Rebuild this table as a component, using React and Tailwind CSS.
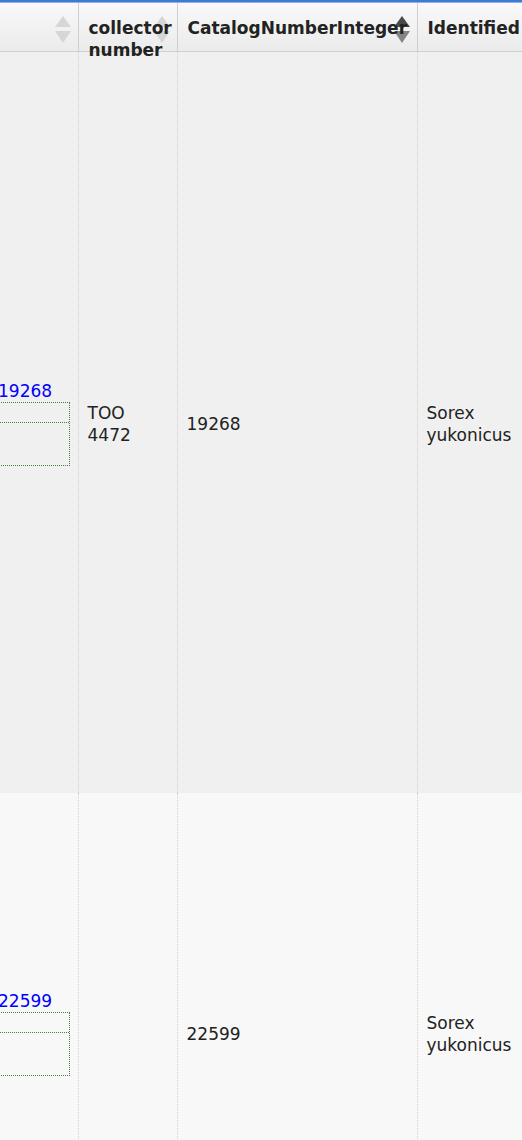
import React from 'react'

function SortIcon({ active }) {
  return (
    <svg width="18" height="27" viewBox="0 0 18 27" className="absolute right-[6px] top-[13px]">
      <path d="M9 0 L17 11 L1 11 Z" fill={active ? '#4a4a4a' : '#d6d6d6'} />
      <path d="M1 15 L17 15 L9 27 Z" fill={active ? '#858585' : '#d6d6d6'} />
    </svg>
  )
}

const rows = [
  { id: '19268', collector: ['TOO', '4472'], catalog: '19268', name: ['Sorex', 'yukonicus'], h: 'h-[742px]', bg: 'bg-[#f0f0f0]' },
  { id: '22599', collector: null, catalog: '22599', name: ['Sorex', 'yukonicus'], h: 'h-[478px]', bg: 'bg-[#f8f8f8]' },
]

function App() {
  return (
    <div className="w-[522px] h-[1140px] overflow-hidden bg-white text-[#222] font-['DejaVu_Sans',Verdana,sans-serif] text-[17px] leading-[22px]">
      <div className="h-[3px] bg-[#3f7bd3] border-b border-[#8cb2e8]"></div>
      <table className="border-collapse table-fixed w-[640px]">
        <colgroup>
          <col className="w-[78px]" />
          <col className="w-[99px]" />
          <col className="w-[240px]" />
          <col className="w-[223px]" />
        </colgroup>
        <thead>
          <tr className="h-[48px] bg-gradient-to-b from-[#f9f9f9] to-[#ebebeb]">
            <th className="relative border-r border-b border-[#cfcfcf] p-0 align-top"><SortIcon /></th>
            <th className="relative border-r border-b border-[#cfcfcf] pl-[10px] pr-1 pt-[14px] align-top text-left font-bold">
              <div className="h-[32px] overflow-visible whitespace-nowrap">
                <SortIcon />
                <span className="relative">collector<br />number</span>
              </div>
            </th>
            <th className="relative border-r border-b border-[#cfcfcf] pl-[10px] pt-[14px] align-top text-left font-bold whitespace-nowrap">
              <SortIcon active />
              <span className="relative">CatalogNumberInteger</span>
            </th>
            <th className="relative border-b border-[#cfcfcf] pl-[10px] pt-[14px] align-top text-left font-bold whitespace-nowrap">
              Identified
            </th>
          </tr>
        </thead>
        <tbody>
          {rows.map((r) => (
            <tr key={r.id} className={`${r.h} ${r.bg}`}>
              <td className="border-r border-dotted border-[#d2d2d2] pr-[8px] pl-0 pt-[2px] align-middle overflow-hidden">
                <div className="-ml-[2px] text-[#0000ff]">{r.id}</div>
                <div className="-ml-4 border border-dotted border-[#3f843f]">
                  <div className="h-[20px] border-b border-dotted border-[#3f843f]"></div>
                  <div className="h-[42px]"></div>
                </div>
              </td>
              <td className="border-r border-dotted border-[#d2d2d2] pl-[9px] pt-[4px] align-middle">
                {r.collector && (
                  <div>{r.collector[0]}<br />{r.collector[1]}</div>
                )}
              </td>
              <td className="border-r border-dotted border-[#d2d2d2] pl-[9px] pt-[4px] align-middle">{r.catalog}</td>
              <td className="pl-[9px] pt-[4px] align-middle">
                {r.name[0]}<br />{r.name[1]}
              </td>
            </tr>
          ))}
        </tbody>
      </table>
    </div>
  )
}

export default App
